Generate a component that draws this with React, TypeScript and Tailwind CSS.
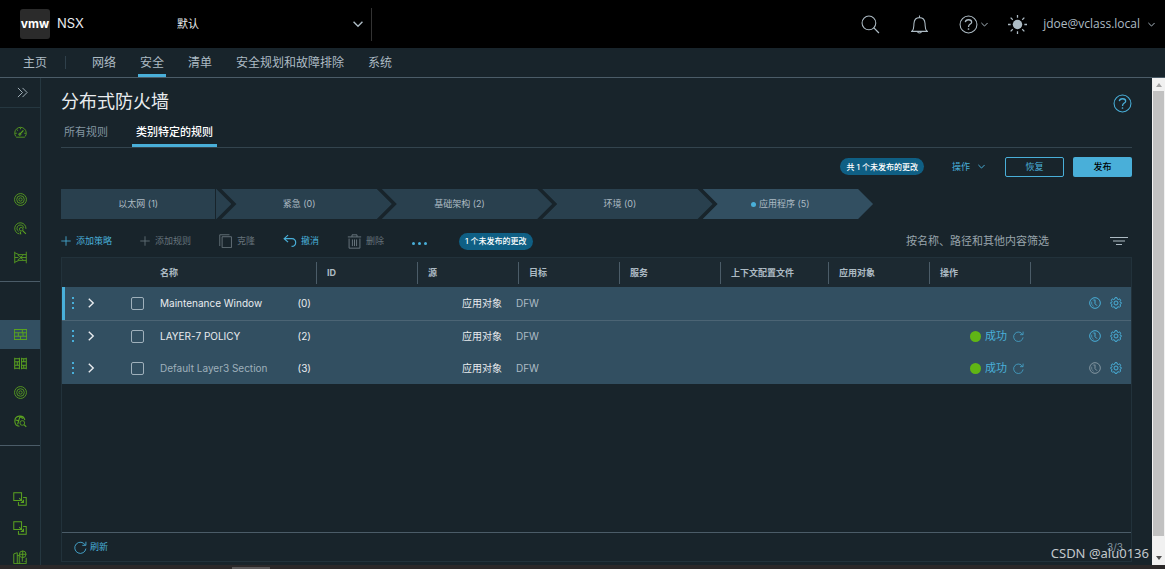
import type { ReactNode } from "react";
import clsx from "clsx";

type IconProps = { className?: string; children?: ReactNode };

// All line icons share the 36 unit grid
function Icon({ className, children }: IconProps) {
  return (
    <svg
      viewBox="0 0 36 36"
      fill="none"
      stroke="currentColor"
      strokeWidth={2.4}
      className={clsx("shrink-0", className)}
      aria-hidden="true"
    >
      {children}
    </svg>
  );
}

const Chevron = ({ className }: IconProps) => (
  <Icon className={className}>
    <path d="M2 10 L18 26 L34 10" strokeWidth={5} />
  </Icon>
);

const HelpIcon = ({ className }: IconProps) => (
  <Icon className={className}>
    <circle cx="18" cy="18" r="16" strokeWidth={2} />
    <path d="M12 13.5 C12.5 7.5 24 7.5 24 13.5 C24 17.5 18 17 18 22.5" />
    <circle cx="18" cy="26.5" r="1.6" fill="currentColor" stroke="none" />
  </Icon>
);

const RefreshIcon = ({ className }: IconProps) => (
  <Icon className={className}>
    <path d="M31 11 A15.5 15.5 0 1 0 33 21" />
    <path d="M33 2 V12 H23" />
  </Icon>
);

const PlusIcon = ({ className }: IconProps) => (
  <Icon className={className}>
    <path d="M18 1 V35 M1 18 H35" strokeWidth={3} />
  </Icon>
);

const ClockIcon = ({ className }: IconProps) => (
  <Icon className={className}>
    <circle cx="18" cy="18" r="16" strokeWidth={3} />
    <path d="M18 8 V20 L24 26" strokeWidth={3} />
    <path d="M11 9 H18 M8 14 A12 12 0 0 0 14 28" strokeWidth={2} />
  </Icon>
);

const GearIcon = ({ className }: IconProps) => (
  <Icon className={className}>
    <path
      d="M15 2 H21 L22 6.5 L25 7.7 L29 5.5 L32 10 L30 13.5 L31 16 L35 18 L31 21 L30 24 L32 27 L28 31 L24.5 29 L22 30.2 L21 34 H15 L14 30.2 L11.5 29 L8 31 L4 27 L6 24 L5 21 L1 18 L5 16 L6 13.5 L4 10 L7 5.5 L11 7.7 L14 6.5 Z"
      strokeWidth={3}
    />
    <circle cx="18" cy="18" r="6" strokeWidth={3} />
  </Icon>
);

const GaugeIcon = () => (
  <Icon className="size-[13px]">
    <path d="M6 31 H30 M5 29 A16 16 0 1 1 31 29 M18 5 V9 M3 20 H8 M28 20 H33 M8 10 L11 13" />
    <path d="M15 24 L26 12" strokeWidth={3.5} />
    <circle cx="16" cy="23" r="3" />
  </Icon>
);

const RingsIcon = () => (
  <Icon className="size-[13px]">
    <circle cx="18" cy="18" r="16.5" />
    <circle cx="18" cy="18" r="10.5" />
    <circle cx="18" cy="18" r="4.5" />
  </Icon>
);

const RadarIcon = () => (
  <Icon className="size-[13px]">
    <path d="M33 19 A15.5 15.5 0 1 0 15 33" />
    <path d="M27 16 A9.5 9.5 0 1 0 13 26" />
    <circle cx="20" cy="20" r="5" />
    <path d="M24 24 L33 33 M17 27 L19 34" strokeWidth={3} />
  </Icon>
);

const GatewayIcon = () => (
  <Icon className="size-[13px]">
    <path d="M2 2 V34 M34 2 V34 M2 5 L14 10 H34 M2 31 L14 26 H34 M2 18 H12 M10 11 L20 18 L10 25 M34 18 H18 M26 11 L18 18 L26 25" />
  </Icon>
);

const FirewallIcon = () => (
  <Icon className="size-[13px]">
    <path d="M1 4 H35 V32 H1 Z M1 13 H35 M1 23 H35 M23 4 V13 M12 13 V23 M25 13 V23 M18 23 V32" strokeWidth={2.8} />
  </Icon>
);

const SplitWallIcon = () => (
  <Icon className="size-[13px]">
    <path d="M2 2 V34 M15 2 V34 M21 2 V34 M34 2 V34 M2 5 H15 M2 13 H15 M2 23 H15 M2 31 H15 M21 5 H34 M21 13 H34 M21 23 H34 M21 31 H34 M9 13 V23 M27 5 V13 M27 23 V31" strokeWidth={2.8} />
  </Icon>
);

const HuntIcon = () => (
  <Icon className="size-[13px]">
    <path d="M30 14 A14 14 0 1 0 15 31 M5 14 L13 16 L16 5 M13 16 L10 26 M16 5 L25 10" strokeWidth={3} />
    <circle cx="23" cy="22" r="6.5" />
    <path d="M28 27 L34 33" strokeWidth={3} />
  </Icon>
);

const LinkedIcon = () => (
  <Icon className="size-[14px]">
    <path d="M2 2 H22 V22 H2 Z M26 14 H34 V34 H14 V26 M16 16 L27 27 M27 20 V27 H20" strokeWidth={2.6} />
  </Icon>
);

const CityIcon = () => (
  <Icon className="size-[14px]">
    <path d="M2 35 V10 L11 7 V35 M11 14 H16 V35 M2 35 H34 V20 M24 20 V30 M18 30 V32 M31 28 V31" />
    <circle cx="25" cy="11" r="8.5" />
    <path d="M16 11 H34 M25 2 V20" />
  </Icon>
);

const sideGroups = [
  [
    { name: "攻击面", icon: <RingsIcon /> },
    { name: "威胁检测", icon: <RadarIcon /> },
    { name: "网关流量", icon: <GatewayIcon /> },
  ],
  [
    { name: "分布式防火墙", icon: <FirewallIcon />, active: true },
    { name: "网关防火墙", icon: <SplitWallIcon /> },
    { name: "入侵检测", icon: <RingsIcon /> },
    { name: "恶意软件防护", icon: <HuntIcon /> },
  ],
  [
    { name: "东西向服务", icon: <LinkedIcon /> },
    { name: "南北向服务", icon: <LinkedIcon /> },
    { name: "端点保护", icon: <CityIcon /> },
  ],
];

const navItems = ["网络", "安全", "清单", "安全规划和故障排除", "系统"];

const steps = [
  { label: "以太网 (1)" },
  { label: "紧急 (0)" },
  { label: "基础架构 (2)" },
  { label: "环境 (0)" },
  { label: "应用程序 (5)", active: true },
];

const columns = ["ID", "源", "目标", "服务", "上下文配置文件", "应用对象", "操作"];

const policies = [
  { name: "Maintenance Window", count: 0, changed: true },
  { name: "LAYER-7 POLICY", count: 2, status: "成功" },
  { name: "Default Layer3 Section", count: 3, status: "成功", isDefault: true },
];

function Header() {
  return (
    <header className="flex h-12 shrink-0 items-center bg-black pl-5 pr-2.5 text-[#adbbc4]">
      <div className="flex w-[145px] items-center gap-[7px]">
        <span className="flex size-[30px] items-center justify-center rounded-[3px] bg-[#2b2b2b] font-['Inter',sans-serif] text-xs font-bold text-white">
          vmw
        </span>
        <span className="font-['Inter',sans-serif] text-[13px] text-[#e9ecef]">NSX</span>
      </div>
      <div className="relative flex h-[33px] w-[207px] items-center border-r border-[#333]">
        <select
          aria-label="项目"
          className="w-full appearance-none bg-transparent pl-3 text-[11px] text-[#e9ecef]"
        >
          <option>默认</option>
        </select>
        <Chevron className="pointer-events-none absolute right-2 size-2.5" />
      </div>
      <div className="ml-auto flex items-center">
        <button aria-label="搜索" className="mr-[30px]">
          <Icon className="size-[19px]">
            <circle cx="15" cy="15" r="13" strokeWidth={2} />
            <path d="M24 24 L34 34" />
          </Icon>
        </button>
        <button aria-label="通知" className="mr-[30px]">
          <Icon className="size-[19px]">
            <path d="M2 31 H34 M4 31 C8 26 7 22 7.5 16 C8 9 12 5 18 5 C24 5 28 9 28.5 16 C29 22 28 26 32 31 M18 1 V5 M14 31 C15 35 21 35 22 31" strokeWidth={2} />
          </Icon>
        </button>
        <button aria-label="帮助" className="mr-5 flex items-center gap-[3px]">
          <HelpIcon className="size-[19px]" />
          <Chevron className="size-[7px]" />
        </button>
        <button aria-label="主题" className="mr-4">
          <Icon className="size-[19px]">
            <circle cx="18" cy="18" r="9" fill="currentColor" stroke="none" />
            <path d="M18 0 V5 M18 31 V36 M0 18 H5 M31 18 H36 M5 5 L9 9 M27 27 L31 31 M5 31 L9 27 M27 9 L31 5" />
          </Icon>
        </button>
        <button className="flex items-center gap-2 font-['Open_Sans',sans-serif] text-xs">
          jdoe@vclass.local
          <Chevron className="size-[7px]" />
        </button>
      </div>
    </header>
  );
}

function Nav() {
  return (
    <nav className="flex h-[30px] shrink-0 border-b border-[#4b5c68] pl-[23px] text-xs text-[#adbbc4]">
      <a href="#home" className="flex items-center">主页</a>
      <span className="mx-[18px] my-2 border-l border-[#2f404b]" />
      <div className="flex gap-5 pl-1.5">
        {navItems.map((item) => (
          <a
            key={item}
            href={`#${item}`}
            className={clsx(
              "flex items-center border-b-[3px] px-[2px] pt-[3px]",
              item === "安全" ? "border-[#49afd9]" : "border-transparent"
            )}
          >
            {item}
          </a>
        ))}
      </div>
    </nav>
  );
}

function Sidebar() {
  return (
    <aside className="w-[41px] shrink-0 overflow-hidden border-r border-[#253740] text-[#5aa220]">
      <button
        aria-label="展开"
        className="flex h-[30px] w-full items-center justify-center border-b border-[#253740] pl-1 text-[#adbbc4]"
      >
        <Icon className="size-[11px]">
          <path d="M3 3 L18 18 L3 33 M18 3 L33 18 L18 33" strokeWidth={3} />
        </Icon>
      </button>
      <a href="#overview" aria-label="概览" className="mt-2.5 flex h-[29px] items-center justify-center">
        <GaugeIcon />
      </a>
      {sideGroups.map((group, i) => (
        <div
          key={i}
          className={clsx("pt-[38px]", i < sideGroups.length - 1 && "border-b border-[#4b5c68] pb-[9px]")}
        >
          {group.map((item) => (
            <a
              key={item.name}
              href={`#${item.name}`}
              aria-label={item.name}
              className={clsx(
                "flex h-[29px] items-center justify-center",
                "active" in item && "bg-[#324f61]"
              )}
            >
              {item.icon}
            </a>
          ))}
        </div>
      ))}
    </aside>
  );
}

function Badge({ children }: { children: ReactNode }) {
  return (
    <span className="flex h-[17px] items-center rounded-full bg-[#0f5f84] px-1.5 text-[8px] font-medium text-white">
      {children}
    </span>
  );
}

function Steps() {
  return (
    <ol className="mt-3 flex h-[30px] w-full max-w-[812px] text-[9px] text-[#adbbc4]">
      {steps.map((step, i) => (
        <li
          key={step.label}
          className={clsx(
            "flex flex-1 pr-[15px]",
            step.active ? "bg-[#324f61]" : "bg-[#29404e]",
            i === 0
              ? "[clip-path:polygon(0_0,calc(100%_-_15px)_0,100%_50%,calc(100%_-_15px)_100%,0_100%)]"
              : "-ml-2.5 [clip-path:polygon(0_0,calc(100%_-_15px)_0,100%_50%,calc(100%_-_15px)_100%,0_100%,15px_50%)]"
          )}
        >
          <button
            className={clsx(
              "flex w-full items-center justify-center gap-[3px]",
              i === 0 && "border-r border-[#18242b]"
            )}
          >
            {step.active && <span className="size-[5px] rounded-full bg-[#49afd9]" />}
            {step.label}
          </button>
        </li>
      ))}
    </ol>
  );
}

function Toolbar() {
  return (
    <div className="mt-3 flex h-5 items-center gap-7 text-[9px] text-[#49afd9]">
      <button className="flex items-center gap-[5px]">
        <PlusIcon className="size-2.5" />
        添加策略
      </button>
      <button disabled className="flex items-center gap-[5px] text-[#66737b]">
        <PlusIcon className="size-2.5" />
        添加规则
      </button>
      <button disabled className="flex items-center gap-1 text-[#66737b]">
        <Icon className="size-[14px]">
          <path d="M8 7 H32 V35 H8 Z M2 31 V2 H27" />
        </Icon>
        克隆
      </button>
      <button className="flex items-center gap-1">
        <Icon className="size-[14px]">
          <path d="M13 3 L3 12 L13 21 M3 12 H23 C36 12 36 31 22 32" strokeWidth={3} />
        </Icon>
        撤消
      </button>
      <button disabled className="flex items-center gap-1 text-[#66737b]">
        <Icon className="size-[15px]">
          <path d="M2 7 H34 M12 7 V2 H24 V7 M5 11 V34 H31 V11 M13 13 V29 M18 13 V29 M23 13 V29" />
        </Icon>
        删除
      </button>
      <button aria-label="更多" className="flex gap-[3px] pr-1 pt-1">
        <span className="size-[3px] rounded-full bg-[#49afd9]" />
        <span className="size-[3px] rounded-full bg-[#49afd9]" />
        <span className="size-[3px] rounded-full bg-[#49afd9]" />
      </button>
      <Badge>1 个未发布的更改</Badge>
      <div className="ml-auto flex items-center">
        <input
          aria-label="筛选"
          placeholder="按名称、路径和其他内容筛选"
          className="w-[204px] bg-transparent text-[11px] placeholder:text-[#98a4ac]"
        />
        <button aria-label="筛选选项" className="mr-1 text-[#adbbc4]">
          <Icon className="size-[18px]">
            <path d="M0 11 H36 M6 18 H30 M12 25 H24" />
          </Icon>
        </button>
      </div>
    </div>
  );
}

function PolicyTable() {
  return (
    <div className="mt-1.5 flex min-h-0 flex-1 flex-col border border-[#22323b]">
      <table className="w-full table-fixed text-left">
        <colgroup>
          <col className="w-[63px]" />
          <col className="w-[26px]" />
          <col className="w-[165px]" />
          <col className="w-[101px]" />
          <col className="w-[101px]" />
          <col className="w-[101px]" />
          <col className="w-[101px]" />
          <col className="w-[108px]" />
          <col className="w-[101px]" />
          <col className="w-[101px]" />
          <col />
        </colgroup>
        <thead className="bg-[#1c2931] text-[9px] text-[#adbbc4]">
          <tr className="h-[29px]">
            <th colSpan={2} className="p-0" />
            <th className="p-0 pl-[9px] font-bold">名称</th>
            {columns.map((column) => (
              <th key={column} className="p-0 font-bold">
                <span className="flex h-[22px] items-center border-l border-[#4b5c68] pl-2.5">
                  {column}
                </span>
              </th>
            ))}
            <th className="p-0">
              <span className="block h-[22px] border-l border-[#4b5c68]" />
            </th>
          </tr>
        </thead>
        <tbody className="bg-[#324f61] text-[10px] text-[#e9ecef]">
          {policies.map((policy) => (
            <tr
              key={policy.name}
              className={clsx(policy.changed ? "h-[33px] border-b border-[#4b6474]" : "h-8")}
            >
              <td className={clsx("p-0", policy.changed && "shadow-[inset_3px_0_0_#49afd9]")}>
                <div className="flex items-center gap-3 pl-2.5">
                  <button aria-label="拖动" className="flex flex-col gap-[3px]">
                    <span className="size-[2px] bg-[#49afd9]" />
                    <span className="size-[2px] bg-[#49afd9]" />
                    <span className="size-[2px] bg-[#49afd9]" />
                  </button>
                  <button aria-label="展开策略">
                    <Icon className="size-2.5">
                      <path d="M10 3 L26 18 L10 33" strokeWidth={5} />
                    </Icon>
                  </button>
                </div>
              </td>
              <td className="p-0 pl-1.5">
                <input
                  type="checkbox"
                  aria-label={policy.name}
                  className="block size-[13px] appearance-none rounded-[2px] border border-[#9fb0bb]"
                />
              </td>
              <td className="p-0 pl-[9px] pr-[5px]">
                <div className="flex justify-between whitespace-nowrap">
                  <span className={clsx(policy.isDefault && "text-[#9fb0bb]")}>{policy.name}</span>
                  <span>({policy.count})</span>
                </div>
              </td>
              <td />
              <td colSpan={5} className="p-0 pl-[45px]">
                应用对象
                <span className="ml-[14px] text-[#adbbc4]">DFW</span>
              </td>
              <td className="p-0 pl-[41px]">
                {policy.status && (
                  <div className="flex items-center gap-1 text-[#49afd9]">
                    <span className="size-[11px] rounded-full bg-[#60b515]" />
                    <span className="text-[11px]">{policy.status}</span>
                    <button aria-label="刷新状态" className="ml-[2px]">
                      <RefreshIcon className="size-[11px]" />
                    </button>
                  </div>
                )}
              </td>
              <td className="p-0 pr-[9px]">
                <div className="flex items-center justify-end gap-[9px] text-[#49afd9]">
                  <button aria-label="时间窗口" className={clsx(policy.isDefault && "text-[#8496a1]")}>
                    <ClockIcon className="size-3" />
                  </button>
                  <button aria-label="设置">
                    <GearIcon className="size-3" />
                  </button>
                </div>
              </td>
            </tr>
          ))}
        </tbody>
      </table>
      <footer className="mt-auto flex h-[29px] items-center justify-between border-t border-[#4b5c68] pl-3 pr-2 text-[9px]">
        <button className="flex items-center gap-[3px] text-[#49afd9]">
          <RefreshIcon className="size-[13px]" />
          刷新
        </button>
        <span className="text-[10px] text-[#8496a1]">3/3</span>
      </footer>
    </div>
  );
}

export default function App() {
  return (
    <div className="relative flex h-screen flex-col overflow-hidden bg-[#18242b] font-['Inter','Noto_Sans_CJK_SC',sans-serif] text-[#e9ecef]">
      <Header />
      <Nav />
      <div className="flex min-h-0 flex-1">
        <Sidebar />
        <main className="flex min-w-0 flex-1 flex-col px-5 pb-[3px]">
          <div className="flex h-10 items-end justify-between">
            <h1 className="text-lg leading-8">分布式防火墙</h1>
            <button aria-label="页面帮助" className="mb-[5px] text-[#49afd9]">
              <HelpIcon className="size-[19px]" />
            </button>
          </div>
          <div role="tablist" className="flex h-[30px] gap-[21px] border-b border-[#33444e] text-[11px]">
            <button role="tab" className="px-[3px] text-[#8496a1]">所有规则</button>
            <button
              role="tab"
              aria-selected="true"
              className="border-b-[3px] border-[#49afd9] px-1 pt-[3px] font-medium text-white"
            >
              类别特定的规则
            </button>
          </div>
          <div className="mt-2 flex h-[21px] items-center justify-end text-[9px]">
            <Badge>共 1 个未发布的更改</Badge>
            <button className="ml-7 mr-5 flex items-center gap-2 text-[#49afd9]">
              操作
              <Chevron className="size-[7px]" />
            </button>
            <button className="mr-[9px] h-5 w-[59px] rounded-[2px] border border-[#49afd9] text-[#49afd9]">
              恢复
            </button>
            <button className="h-5 w-[59px] rounded-[2px] bg-[#49afd9] font-medium text-black">
              发布
            </button>
          </div>
          <Steps />
          <Toolbar />
          <PolicyTable />
        </main>
        <div className="flex w-[13px] shrink-0 flex-col items-center bg-[#f1f1f1]">
          <span className="flex h-[13px] items-center text-[#a3a3a3]">
            <svg viewBox="0 0 6 4" className="w-1.5" fill="currentColor"><path d="M3 0 L6 4 H0 Z" /></svg>
          </span>
          <span className="w-[11px] flex-1 bg-[#c1c1c1]" />
          <span className="flex h-[29px] items-end pb-[5px] text-[#505050]">
            <svg viewBox="0 0 6 4" className="w-1.5" fill="currentColor"><path d="M0 0 H6 L3 4 Z" /></svg>
          </span>
        </div>
      </div>
      <div className="h-1 shrink-0 bg-[#2b2829] pl-[232px] pt-[2px]">
        <div className="h-[2px] w-[38px] bg-[#5c5a5b]" />
      </div>
      <span className="absolute bottom-[6px] right-4 font-['Noto_Sans',sans-serif] text-[13px] leading-5 text-[#c3c8cb]">
        CSDN @alu0136
      </span>
    </div>
  );
}
